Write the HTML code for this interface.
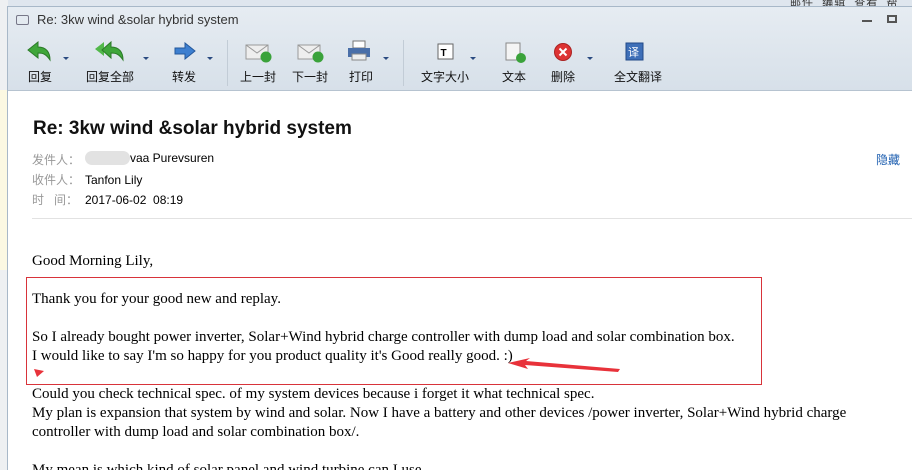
<!DOCTYPE html>
<html><head><meta charset="utf-8"><style>
*{margin:0;padding:0;box-sizing:border-box}
html,body{width:912px;height:470px;overflow:hidden}
body{background:#fff;font-family:"Liberation Sans","Noto Sans CJK SC",sans-serif;position:relative}
.abs{position:absolute}
.win{left:7px;top:6px;width:905px;height:470px;background:#fff;border-left:1px solid #a8b8c8;border-top:1px solid #a8b8c8}
.tb{left:8px;top:7px;width:904px;height:84px;background:linear-gradient(#e6ecf2,#d7e0e9);border-bottom:1px solid #b6c3d0}
.lbl{font-size:12px;color:#111;top:68px;white-space:nowrap}
.dd{width:0;height:0;border-left:3px solid transparent;border-right:3px solid transparent;border-top:3px solid #2a4a80;top:57px}
.sep{top:40px;width:1px;height:46px;background:#c2ccd6}
.body{font-family:"Liberation Serif",serif;font-size:15px;color:#000;left:32px;white-space:nowrap}
.meta{font-size:12px;left:32px;white-space:nowrap}
.g{color:#999;display:inline-block;width:53px}
</style></head><body>
<div class="abs" style="left:0;top:0;width:912px;height:6px;background:#dfe6ee"></div>
<div class="abs" style="left:0;top:0;width:8px;height:470px;background:#eef0f2"></div>
<div class="abs" style="left:0;top:90px;width:8px;height:180px;background:#fbf8e2"></div>
<div class="abs" style="left:790px;top:-6px;font-size:11px;color:#333;letter-spacing:1px">邮件 &nbsp;编辑 &nbsp;查看 &nbsp;帮</div>
<div class="abs win"></div>
<div class="abs tb"></div>
<div class="abs" style="left:16px;top:15px;width:13px;height:10px;border:1px solid #778;border-radius:2px"></div>
<div class="abs" style="left:37px;top:12px;font-size:13px;color:#333">Re: 3kw wind &amp;solar hybrid system</div>
<div class="abs" style="left:862px;top:20px;width:10px;height:2px;background:#555"></div>
<div class="abs" style="left:887px;top:15px;width:10px;height:8px;border:2px solid #555"></div>
<svg class="abs" style="left:26px;top:40px" width="26" height="22"><path d="M2 10 L12 2 L12 7 C20 7 24 12 24 20 C20 14 17 13 12 13 L12 18 Z" fill="#3fa63a" stroke="#2b7a28"/></svg>
<svg class="abs" style="left:93px;top:40px" width="32" height="22"><path d="M2 9 L11 2 L11 16 Z" fill="#52b84a"/><path d="M9 10 L18 2 L18 7 C26 7 30 12 30 20 C26 14 23 13 18 13 L18 18 Z" fill="#3fa63a" stroke="#2b7a28"/></svg>
<svg class="abs" style="left:173px;top:42px" width="24" height="18"><path d="M2 6 H12 V1 L22 9 L12 17 V12 H2 Z" fill="#3d7fd0" stroke="#24589c"/></svg>
<svg class="abs" style="left:245px;top:42px" width="28" height="22"><rect x="1" y="3" width="22" height="14" fill="#eee" stroke="#999"/><path d="M1 3 L12 11 L23 3" stroke="#999" fill="none"/><circle cx="21" cy="15" r="5.5" fill="#3aa23a"/></svg>
<svg class="abs" style="left:297px;top:42px" width="28" height="22"><rect x="1" y="3" width="22" height="14" fill="#eee" stroke="#999"/><path d="M1 3 L12 11 L23 3" stroke="#999" fill="none"/><circle cx="21" cy="15" r="5.5" fill="#3aa23a"/></svg>
<svg class="abs" style="left:347px;top:40px" width="24" height="22"><rect x="6" y="1" width="12" height="7" fill="#fff" stroke="#777"/><rect x="1" y="8" width="22" height="9" fill="#4a6fa8"/><rect x="5" y="14" width="14" height="6" fill="#eee" stroke="#888"/></svg>
<svg class="abs" style="left:437px;top:43px" width="18" height="18"><rect x="1" y="1" width="15" height="15" fill="#fff" stroke="#666"/><text x="3.5" y="13" font-size="10" font-weight="bold" font-family="Liberation Sans">T</text></svg>
<svg class="abs" style="left:504px;top:42px" width="24" height="22"><rect x="2" y="1" width="14" height="17" fill="#f4f4f4" stroke="#888"/><circle cx="17" cy="16" r="5" fill="#3aa23a"/></svg>
<svg class="abs" style="left:553px;top:42px" width="20" height="20"><circle cx="10" cy="10" r="8.5" fill="#d33" stroke="#a22"/><path d="M6.5 6.5 L13.5 13.5 M13.5 6.5 L6.5 13.5" stroke="#fff" stroke-width="2"/></svg>
<svg class="abs" style="left:625px;top:42px" width="20" height="20"><rect x="1" y="1" width="17" height="17" fill="#3e6fb8" stroke="#224a88"/><text x="3" y="14" font-size="11" fill="#fff" font-family="Noto Sans CJK SC">译</text></svg>
<div class="abs lbl" style="left:28px">回复</div>
<div class="abs lbl" style="left:86px">回复全部</div>
<div class="abs lbl" style="left:172px">转发</div>
<div class="abs lbl" style="left:240px">上一封</div>
<div class="abs lbl" style="left:292px">下一封</div>
<div class="abs lbl" style="left:349px">打印</div>
<div class="abs lbl" style="left:421px">文字大小</div>
<div class="abs lbl" style="left:502px">文本</div>
<div class="abs lbl" style="left:551px">删除</div>
<div class="abs lbl" style="left:614px">全文翻译</div>
<div class="abs dd" style="left:63px"></div><div class="abs dd" style="left:143px"></div><div class="abs dd" style="left:207px"></div><div class="abs dd" style="left:383px"></div><div class="abs dd" style="left:470px"></div><div class="abs dd" style="left:587px"></div>
<div class="abs sep" style="left:227px"></div><div class="abs sep" style="left:403px"></div>
<div class="abs" style="left:33px;top:118px;font-size:19px;font-weight:bold;color:#111">Re: 3kw wind &amp;solar hybrid system</div>
<div class="abs meta" style="top:151px"><span class="g">发件人：</span></div>
<div class="abs" style="left:85px;top:151px;width:45px;height:14px;background:#e2e2e2;border-radius:7px"></div>
<div class="abs meta" style="top:151px;left:130px">vaa Purevsuren</div>
<div class="abs meta" style="top:171px"><span class="g">收件人：</span>Tanfon Lily</div>
<div class="abs meta" style="top:191px"><span class="g">时 &nbsp;&nbsp;间：</span>2017-06-02&nbsp; 08:19</div>
<div class="abs" style="left:876px;top:151px;font-size:12px;color:#1e5fb0">隐藏</div>
<div class="abs" style="left:32px;top:218px;width:880px;height:1px;background:#e2e2e2"></div>
<div class="abs body" style="top:253px">Good Morning Lily,</div>
<div class="abs body" style="top:291px">Thank you for your good new and replay.</div>
<div class="abs body" style="top:329px">So I already bought power inverter, Solar+Wind hybrid charge controller with dump load and solar combination box.</div>
<div class="abs body" style="top:348px">I would like to say I'm so happy for you product quality it's Good really good. :)</div>
<div class="abs body" style="top:386px">Could you check technical spec. of my system devices because i forget it what technical spec.</div>
<div class="abs body" style="top:405px">My plan is expansion that system by wind and solar. Now I have a battery and other devices /power inverter, Solar+Wind hybrid charge</div>
<div class="abs body" style="top:424px">controller with dump load and solar combination box/.</div>
<div class="abs body" style="top:462px">My mean is which kind of solar panel and wind turbine can I use.</div>
<div class="abs" style="left:26px;top:277px;width:736px;height:108px;border:1px solid #d8333a"></div>
<svg class="abs" style="left:30px;top:355px" width="600" height="25"><path d="M4 14 L14 16 L7 22 Z" fill="#e8323a"/><path d="M478 8 L500 3 L496 6 L590 14 L588 17 L495 10 L498 14 Z" fill="#e8323a"/></svg>
</body></html>
